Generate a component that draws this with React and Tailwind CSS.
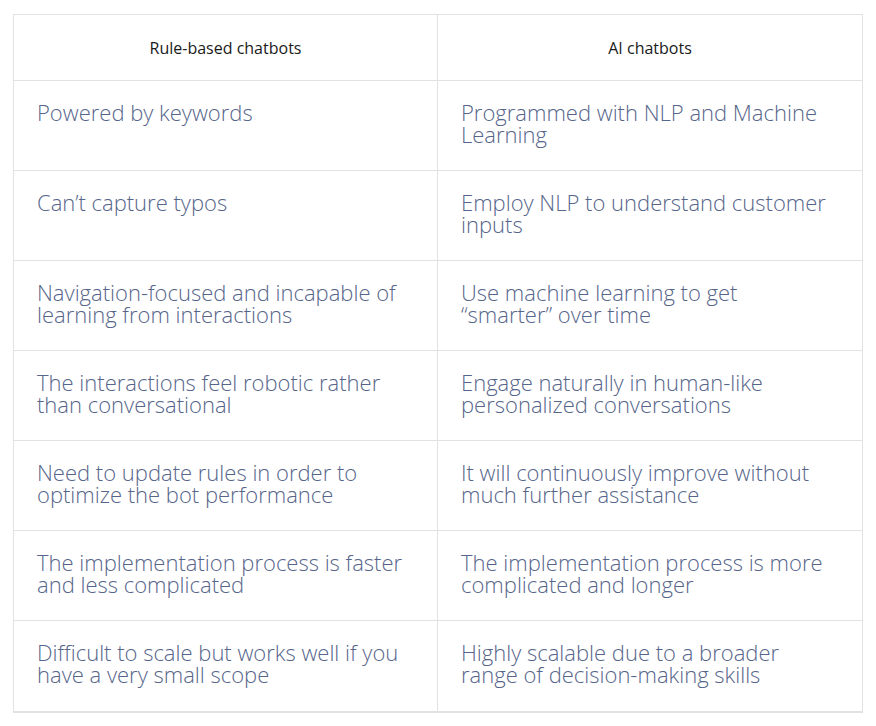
const rows = [
  ["Powered by keywords", "Programmed with NLP and Machine Learning"],
  ["Can’t capture typos", "Employ NLP to understand customer inputs"],
  ["Navigation-focused and incapable of learning from interactions", "Use machine learning to get “smarter” over time"],
  ["The interactions feel robotic rather than conversational", "Engage naturally in human-like personalized conversations"],
  ["Need to update rules in order to optimize the bot performance", "It will continuously improve without much further assistance"],
  ["The implementation process is faster and less complicated", "The implementation process is more complicated and longer"],
  ["Difficult to scale but works well if you have a very small scope", "Highly scalable due to a broader range of decision-making skills"],
]

export default function App() {
  return (
    <div className="w-[876px] h-[726px] bg-white pt-[14px] pl-[13px]" style={{ fontFamily: "'Open Sans', 'Noto Sans', sans-serif" }}>
      <div className="w-[850px] border border-[#e2e2e2] border-b-2">
        <div className="grid grid-cols-[424px_1fr] h-[66px] border-b border-[#e2e2e2]">
          <div className="flex items-center justify-center border-r border-[#e2e2e2] text-[16px] text-[#1a1a1a]">
            Rule-based chatbots
          </div>
          <div className="flex items-center justify-center text-[16px] text-[#1a1a1a]">
            AI chatbots
          </div>
        </div>
        {rows.map((r, i) => (
          <div
            key={i}
            className={`grid grid-cols-[424px_1fr] h-[90px] ${i < rows.length - 1 ? "border-b border-[#e2e2e2]" : ""}`}
          >
            <div className="border-r border-[#e2e2e2] pl-[23px] pr-[19px] pt-[20px] text-[22px] font-light leading-[22px] text-[#56658a]">
              {r[0]}
            </div>
            <div className="pl-[23px] pr-[30px] pt-[20px] text-[22px] font-light leading-[22px] text-[#56658a]">
              {r[1]}
            </div>
          </div>
        ))}
      </div>
    </div>
  )
}
